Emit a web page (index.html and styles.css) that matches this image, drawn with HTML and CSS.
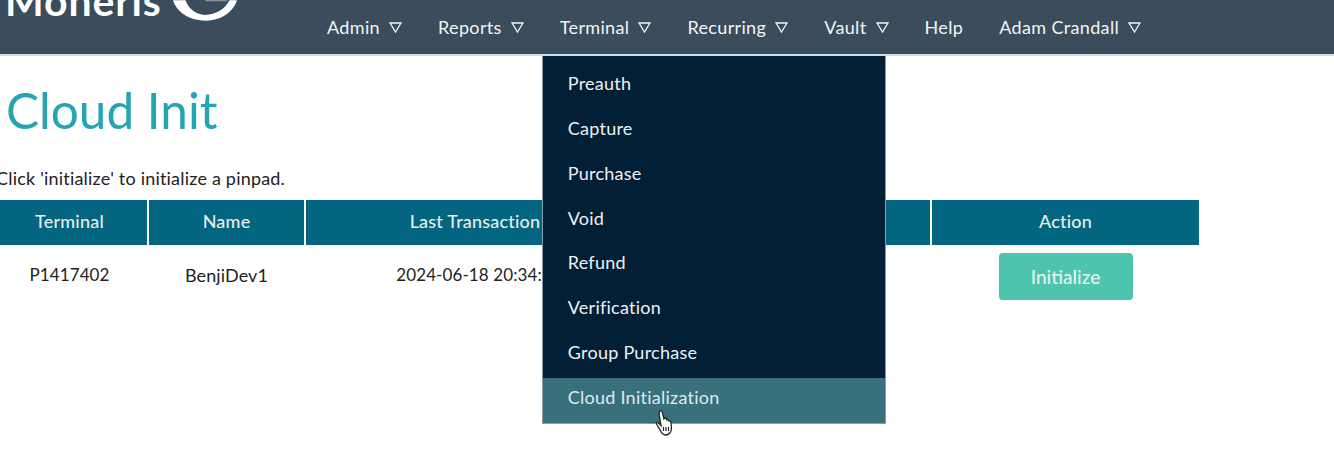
FILE: index.html
```html
<!DOCTYPE html>
<html lang="en">
<head>
    <meta charset="UTF-8">
    <meta name="viewport" content="width=device-width, initial-scale=1.0">
    <title>Cloud Init - Moneris</title>
    <link rel="stylesheet" href="styles.css">
</head>
<body>
    <header class="topbar">
        <div class="logo">
            <span class="logo-text">Moneris</span>
            <svg class="logo-mark" width="66" height="22" viewBox="0 0 68 22">
                <path d="M0 0 C4 13 18 21 34 21 C50 21 62 12 66 0 L58 0 C54 9 44 15 33 15 C24 15 16 9 13 0 Z" fill="#fff"/>
                <path d="M33 0 L56 0 L55 1 L34 1 Z" fill="#9aa5b0"/>
            </svg>
        </div>
        <nav class="nav">
            <a class="nav-item">Admin<svg class="caret" viewBox="0 0 13 11"><path d="M1 1 H12 L6.500 10 Z"/></svg></a>
            <a class="nav-item">Reports<svg class="caret" viewBox="0 0 13 11"><path d="M1 1 H12 L6.500 10 Z"/></svg></a>
            <div class="nav-item">Terminal<svg class="caret" viewBox="0 0 13 11"><path d="M1 1 H12 L6.500 10 Z"/></svg>
                <ul class="menu">
                    <li>Preauth</li>
                    <li>Capture</li>
                    <li>Purchase</li>
                    <li>Void</li>
                    <li>Refund</li>
                    <li>Verification</li>
                    <li>Group Purchase</li>
                    <li class="active">Cloud Initialization
                        <svg class="cursor" width="18" height="26" viewBox="0 0 18 26">
                            <path d="M5 1 C6 0 7 1 7.500 3 L9 9 L10 8 C11 8 12 9 12 10 C13 9 14 10 14 11 C15 10.500 16 11.500 16 13 L16.500 18 C16.500 22 14 25 10.500 25 C7.500 25 6.500 23 5 20 L1.500 14 C1 12.500 2.500 12 4 13.500 L6 15.500 L4 3 C4 2 4.500 1.500 5 1 Z" fill="#fff" stroke="#222" stroke-width="1.300"/>
                            <path d="M8.500 17 V21 M11 17 V21 M13.500 17 V21" stroke="#222" stroke-width="1.200"/>
                        </svg>
                    </li>
                </ul>
            </div>
            <a class="nav-item">Recurring<svg class="caret" viewBox="0 0 13 11"><path d="M1 1 H12 L6.500 10 Z"/></svg></a>
            <a class="nav-item">Vault<svg class="caret" viewBox="0 0 13 11"><path d="M1 1 H12 L6.500 10 Z"/></svg></a>
            <a class="nav-item">Help</a>
            <a class="nav-item">Adam Crandall<svg class="caret" viewBox="0 0 13 11"><path d="M1 1 H12 L6.500 10 Z"/></svg></a>
        </nav>
    </header>

    <main class="content">
        <h1>Cloud Init</h1>
        <p class="intro">Click 'initialize' to initialize a pinpad.</p>
        <table class="terminals">
            <thead>
                <tr>
                    <th class="col-terminal">Terminal</th>
                    <th class="col-name">Name</th>
                    <th class="col-last">Last Transaction</th>
                    <th class="col-extra"></th>
                    <th>Action</th>
                </tr>
            </thead>
            <tbody>
                <tr>
                    <td>P1417402</td>
                    <td class="cell-name">BenjiDev1</td>
                    <td class="cell-date">2024-06-18 20:34:12</td>
                    <td></td>
                    <td class="cell-action"><button class="init-btn">Initialize</button></td>
                </tr>
            </tbody>
        </table>
    </main>
</body>
</html>
```

FILE: styles.css
```css
body {
    font-family: Lato, "Open Sans", sans-serif;
    background-color: #fff;
    margin: 0;
    padding: 0;
    height: 472px;
    overflow: hidden;
}

.topbar {
    position: relative;
    z-index: 2;
    display: flex;
    height: 54px;
    background-color: #3b4c5d;
    border-bottom: 2px solid #d5dee3;
}

.logo {
    width: 327px;
    height: 54px;
    display: flex;
    align-items: flex-start;
    overflow: hidden;
    flex-shrink: 0;
}

.logo-text {
    margin: -15px 0 0 5px;
    color: #fff;
    font-size: 41px;
    line-height: 32px;
    font-weight: 700;
    letter-spacing: 0.9px;
    white-space: nowrap;
}

.logo-mark {
    margin-left: 11px;
    flex-shrink: 0;
}

.nav {
    display: flex;
    gap: 36px;
    padding-top: 17px;
}

.nav-item {
    position: relative;
    display: flex;
    align-items: center;
    height: 20px;
    color: #f2f4f5;
    font-size: 18px;
    letter-spacing: 0.35px;
    line-height: 20px;
    white-space: nowrap;
}

.caret {
    width: 13px;
    height: 11px;
    margin-left: 9px;
}

.caret path {
    fill: none;
    stroke: #f2f4f5;
    stroke-width: 1.300;
}

.menu {
    position: absolute;
    top: 39px;
    left: -18px;
    width: 342px;
    margin: 0;
    padding: 8px 0 0;
    list-style: none;
    background-color: #031f35;
    border: 1px solid #8b9aa5;
    border-top: none;
}

.menu li {
    position: relative;
    height: 44.850px;
    padding-left: 25px;
    line-height: 38px;
    color: #eef1f3;
    font-size: 18px;
    letter-spacing: 0.25px;
}

.menu li.active {
    height: 45px;
    background-color: #38707b;
    color: #dfeaec;
}

.cursor {
    position: absolute;
    left: 112px;
    top: 32px;
}

.content {
    margin-left: -4px;
}

h1 {
    margin: 25px 0 0 10px;
    font-size: 49.500px;
    line-height: 58px;
    font-weight: 400;
    color: #25a5b2;
}

.intro {
    margin: 27px 0 0;
    font-size: 18px;
    letter-spacing: 0.2px;
    line-height: 24px;
    color: #222;
}

.terminals {
    width: 1207px;
    margin: 10px 0 0 -4px;
    border-collapse: separate;
    border-spacing: 0;
    table-layout: fixed;
}

.terminals th {
    height: 42px;
    padding: 0 0 3px;
    background-color: #03657f;
    color: #e6eef1;
    font-size: 18px;
    font-weight: 500;
    letter-spacing: 0.2px;
    text-align: center;
    border-right: 2px solid #fff;
}

.terminals th:last-child {
    border-right: none;
}

.col-terminal {
    width: 155px;
}

.col-name {
    width: 155px;
}

.col-last {
    width: 338px;
}

.col-extra {
    width: 284px;
}

.terminals td {
    padding: 19px 2px 0 0;
    text-align: center;
    font-size: 17px;
    letter-spacing: 0.1px;
    color: #222;
    vertical-align: top;
}

.terminals td.cell-name {
    font-size: 18px;
}

.terminals td.cell-date {
    padding-left: 8px;
}

.terminals td.cell-action {
    padding: 8px 0 0;
}

.init-btn {
    width: 134px;
    height: 47px;
    border: none;
    border-radius: 4px;
    background-color: #4dc4ae;
    color: #e4f5f1;
    font-family: inherit;
    font-size: 19px;
    font-weight: 500;
}
```
